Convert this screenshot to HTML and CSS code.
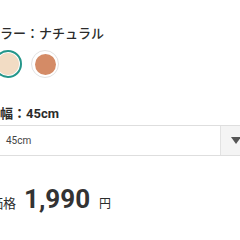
FILE: index.html
```html
<!DOCTYPE html>
<html lang="ja">
<head>
<meta charset="utf-8">
<link rel="stylesheet" href="styles.css">
</head>
<body>
<div class="panel">
  <div class="opt-label">カラー：ナチュラル</div>
  <div class="swatches">
    <span class="swatch selected"><span class="dot natural"></span></span>
    <span class="swatch"><span class="dot brown"></span></span>
  </div>
  <div class="opt-label size">横幅：<b>45cm</b></div>
  <div class="select">
    <span class="select-value">45cm</span>
    <span class="select-arrow"><svg width="10" height="7" viewBox="0 0 10 7"><path d="M0 0H10L5 7Z" fill="#555"/></svg></span>
  </div>
  <div class="price">
    <span class="price-label">価格</span>
    <span class="price-num">1,990</span>
    <span class="price-unit">円</span>
  </div>
</div>
</body>
</html>
```
FILE: styles.css
```css
html, body {
  margin: 0;
  padding: 0;
  background: #fff;
}
body {
  font-family: "Noto Sans CJK JP", "Noto Sans", sans-serif;
  color: #2b2b2b;
  width: 240px;
  height: 240px;
  overflow: hidden;
}
.panel {
  margin-left: -13px;
  width: 270px;
  padding-top: 24px;
}
.opt-label {
  font-size: 13px;
  line-height: 18px;
  height: 18px;
  font-weight: 500;
}
.opt-label.size {
  margin-top: 26px;
  font-weight: bold;
}
.opt-label b {
  font-family: Roboto, "Noto Sans CJK JP", sans-serif;
  font-weight: bold;
}
.swatches {
  display: flex;
  gap: 9px;
  margin-top: 8px;
  padding-left: 7px;
}
.swatch {
  box-sizing: border-box;
  width: 28px;
  height: 28px;
  border-radius: 50%;
  border: 1.5px solid #e2e2e2;
  padding: 2.5px;
  display: flex;
}
.swatch.selected {
  border: 2px solid #24968a;
  padding: 1px;
}
.dot {
  flex: 1;
  border-radius: 50%;
}
.dot.natural { background: #f2dcc4; }
.dot.brown { background: #d48b66; }
.select {
  margin-top: 3px;
  height: 31px;
  box-sizing: border-box;
  border: 1px solid #dedede;
  display: flex;
  align-items: stretch;
  width: 270px;
}
.select-value {
  flex: 1;
  font-family: Roboto, sans-serif;
  font-size: 10px;
  line-height: 29px;
  padding-left: 18px;
  color: #444;
}
.select-arrow {
  width: 36px;
  background: #f4f4f4;
  border-left: 1px solid #e2e2e2;
  display: flex;
  align-items: center;
  padding-left: 10px;
  box-sizing: border-box;
}
.price {
  margin-top: 28px;
  display: flex;
  align-items: baseline;
  padding-left: 3px;
}
.price-label {
  font-size: 13px;
}
.price-num {
  font-family: Roboto, sans-serif;
  font-weight: bold;
  font-size: 26px;
  margin-left: 8px;
  color: #333;
}
.price-unit {
  font-size: 12px;
  margin-left: 9px;
}
```
